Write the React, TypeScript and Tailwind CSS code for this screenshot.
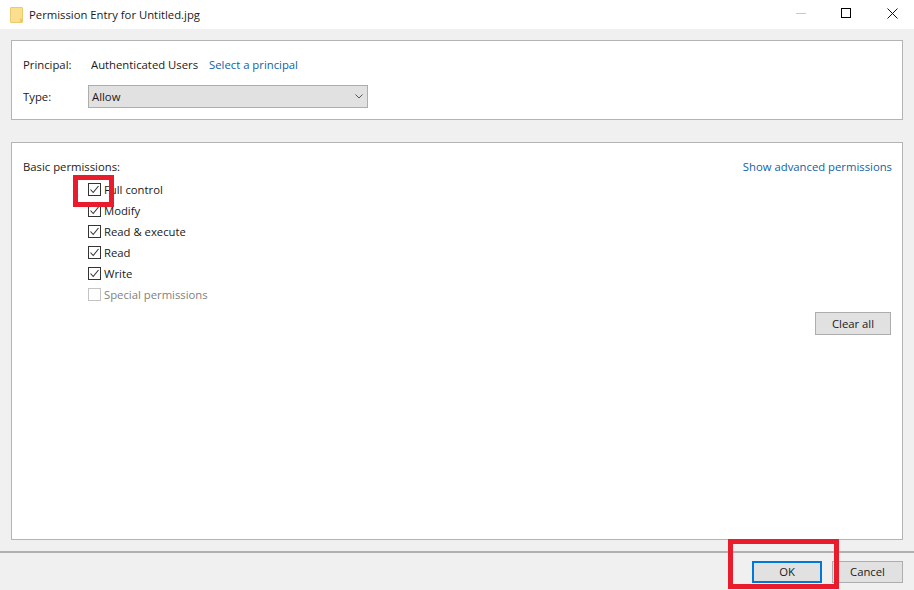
import React from "react";

function Check({ checked = true, disabled = false }: { checked?: boolean; disabled?: boolean }) {
  return (
    <span className={`flex h-[13px] w-[13px] shrink-0 items-center justify-center border bg-white ${disabled ? "border-[#c4c4c4]" : "border-[#333333]"}`}>
      {checked && (
        <svg width="11" height="11" viewBox="0 0 11 11" fill="none">
          <path d="M1.5 5.5 L4.2 8.5 L9.5 2" stroke="#333333" strokeWidth="1.1" />
        </svg>
      )}
    </span>
  );
}

function Row({ label, disabled = false }: { label: string; disabled?: boolean }) {
  return (
    <div className="flex h-[21px] items-center gap-[3px]">
      <Check checked={!disabled} disabled={disabled} />
      <span className={disabled ? "text-[#7f7f7f]" : "text-[#1a1a1a]"}>{label}</span>
    </div>
  );
}

export default function App() {
  return (
    <div className="relative flex h-[590px] w-[914px] flex-col overflow-hidden bg-[#f0f0f0] font-['Open_Sans',sans-serif] text-[11.3px] leading-none text-[#1a1a1a]">
      {/* title bar */}
      <div className="flex h-[29px] shrink-0 items-center bg-white">
        <svg className="ml-[10px] mr-[1px]" width="13" height="16" viewBox="0 0 13 16">
          <path d="M0.5 1 Q0.5 0.5 1 0.5 H12 Q12.5 0.5 12.5 1 V15 Q12.5 15.5 12 15.5 H1 Q0.5 15.5 0.5 15 Z" fill="#fbdf8e" stroke="#ecca72" />
          <path d="M10 15 V11.5 H12.5 V15 Z" fill="#f0c866" />
        </svg>
        <span className="ml-[5px] text-[#1a1a1a]">Permission Entry for Untitled.jpg</span>
        <div className="mb-[3px] ml-auto flex items-center">
          <div className="h-px w-[10px] bg-[#c8c8c8]" />
          <div className="ml-[35px] h-[10px] w-[10px] border border-black" />
          <svg className="ml-[36px] mr-[16px]" width="11" height="11" viewBox="0 0 11 11">
            <path d="M0.5 0.5 L10.5 10.5 M10.5 0.5 L0.5 10.5" stroke="#111" strokeWidth="1" />
          </svg>
        </div>
      </div>

      {/* content */}
      <div className="flex flex-1 flex-col px-[11px] pt-[11px]">
        <div className="h-[80px] shrink-0 border border-[#b4b4b4] bg-white pl-[11px] pt-[11px]">
          <div className="flex h-[26px] items-center">
            <span className="w-[68px]">Principal:</span>
            <span>Authenticated Users</span>
            <span className="ml-[11px] text-[#0f5fa8]">Select a principal</span>
          </div>
          <div className="mt-[7px] flex items-center">
            <span className="w-[65px]">Type:</span>
            <div className="flex h-[23px] w-[280px] items-center justify-between border border-[#adadad] bg-[#e1e1e1] pl-[3px] pr-[4px]">
              <span>Allow</span>
              <svg width="8" height="5" viewBox="0 0 8 5" fill="none">
                <path d="M0.5 0.5 L4 4 L7.5 0.5" stroke="#555" strokeWidth="1" />
              </svg>
            </div>
          </div>
        </div>

        <div className="mt-[22px] flex h-[398px] shrink-0 flex-col border border-[#b4b4b4] bg-white pl-[11px] pr-[10px] pt-[18px]">
          <div className="flex items-center justify-between">
            <span>Basic permissions:</span>
            <span className="text-[#0f5fa8]">Show advanced permissions</span>
          </div>
          <div className="ml-[65px] mt-[7px] flex flex-col">
            <Row label="Full control" />
            <Row label="Modify" />
            <Row label="Read &amp; execute" />
            <Row label="Read" />
            <Row label="Write" />
            <Row label="Special permissions" disabled />
          </div>
          <div className="mr-[1px] mt-[7px] flex justify-end">
            <div className="flex h-[23px] w-[76px] items-center justify-center border border-[#adadad] bg-[#e1e1e1]">Clear all</div>
          </div>
        </div>
      </div>

      {/* footer */}
      <div className="flex h-[39px] shrink-0 items-start justify-end gap-[10px] border-t-2 border-[#b0b0b0] pr-[11px] pt-[8px]">
        <div className="flex h-[22px] w-[70px] items-center justify-center border-2 border-[#0078d7] bg-[#e1e1e1]">OK</div>
        <div className="flex h-[22px] w-[71px] items-center justify-center border border-[#adadad] bg-[#e1e1e1]">Cancel</div>
      </div>

      {/* annotation overlays */}
      <div className="absolute left-[73px] top-[175px] h-[32px] w-[41px] border-[5px] border-[#e81c2c]" />
      <div className="absolute left-[728px] top-[539px] h-[50px] w-[111px] border-[5px] border-[#e81c2c]" />
    </div>
  );
}
